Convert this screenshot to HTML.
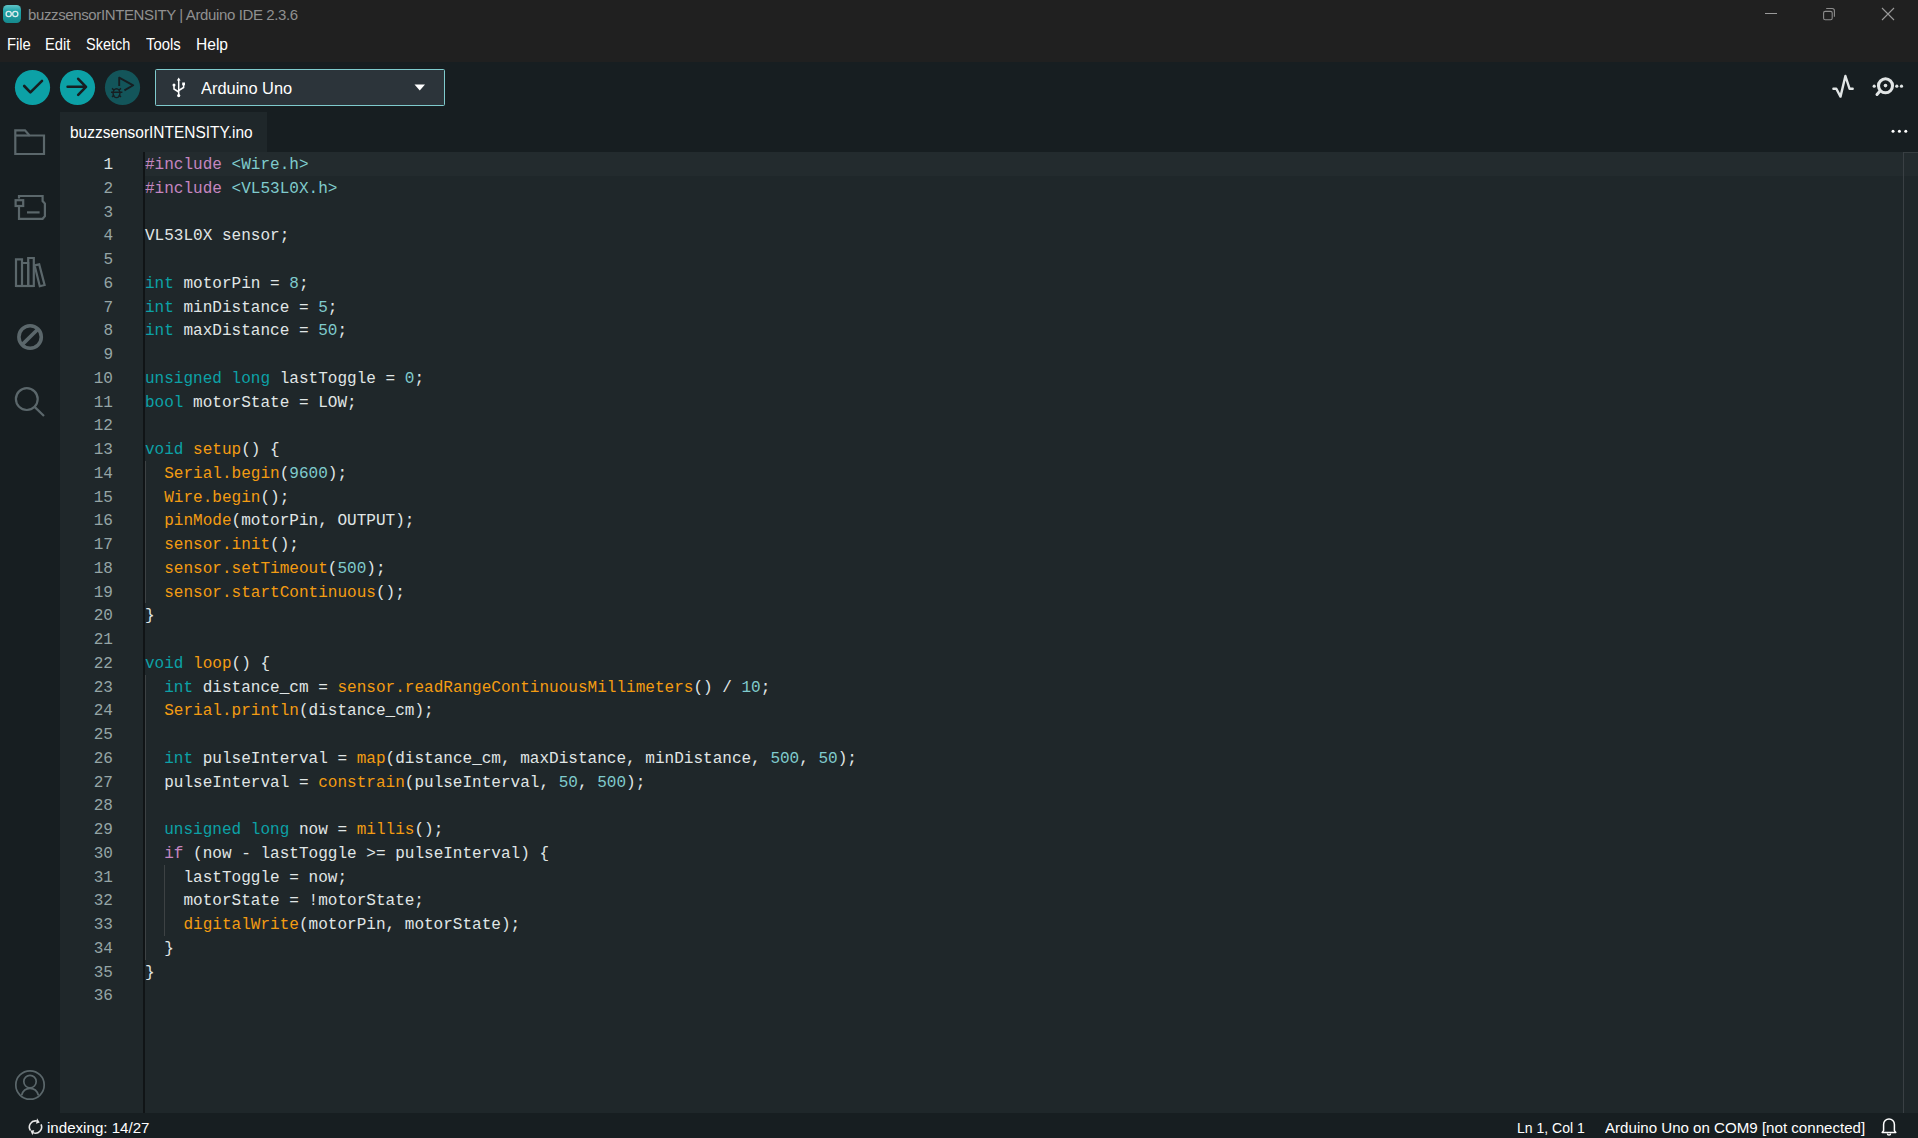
<!DOCTYPE html>
<html><head><meta charset="utf-8">
<style>
*{margin:0;padding:0;box-sizing:border-box}
html,body{width:1918px;height:1138px;overflow:hidden;background:#1f272a;font-family:"Liberation Sans",sans-serif}
.abs{position:absolute}
svg{position:absolute;overflow:visible}
#title{left:0;top:0;width:1918px;height:62px;background:#202020}
#titletext{left:28px;top:4px;font-size:15px;line-height:20px;color:#a8a8a8;white-space:nowrap;letter-spacing:-0.38px}
.menu{top:34px;font-size:15.5px;line-height:20px;color:#ffffff;white-space:nowrap}
#toolbar{left:0;top:62px;width:1918px;height:50px;background:#171e21}
#sidebar{left:0;top:112px;width:60px;height:1001px;background:#171e21}
#tabbar{left:60px;top:112px;width:1858px;height:40px;background:#171e21}
#tab{left:60px;top:112px;width:207px;height:40px;background:#1f272a}
#tabtext{left:70px;top:122px;font-size:16.5px;line-height:20px;color:#ffffff;white-space:nowrap}
#editor{left:60px;top:152px;width:1858px;height:961px;background:#1f272a}
#curline{left:145px;top:152px;width:1773px;height:24px;background:#232b2e}
#gutline{left:143px;top:152px;width:2px;height:961px;background:#101416}
.guide{width:1px;background:#3d4244}
#vscroll{left:1903px;top:152px;width:1px;height:961px;background:#3a4044}
#status{left:0;top:1113px;width:1918px;height:25px;background:#171e21}
.btn{width:35px;height:35px;border-radius:50%;background:#0ca1a6;top:70px}
#board{left:155px;top:69px;width:290px;height:37px;border:1px solid #7fcbcd;border-radius:1.5px;background:#2c343a}
#boardtext{left:201px;top:78px;font-size:16px;line-height:20px;color:#ffffff;white-space:nowrap}
.st{top:1117px;font-size:14.7px;line-height:20px;color:#ffffff;white-space:nowrap}
#code{left:145px;top:154px;width:1750px;height:900px}
.cl{position:absolute;left:0;height:23.75px;line-height:23.75px;font-family:"Liberation Mono",monospace;font-size:16.04px;white-space:pre;color:#e0e6e6}
#lns{left:60px;top:154px;width:53px;height:900px}
.lnn{position:absolute;right:0;height:23.75px;line-height:23.75px;font-family:"Liberation Mono",monospace;font-size:16.04px;color:#95a5a6;text-align:right}
.lnn.act{color:#dae3e3}
b{font-weight:normal}
.k{color:#0ca1a6}.p{color:#c586c0}.f{color:#f39c12}.s{color:#7fcbcd}
.txt{line-height:20px;color:#ffffff;white-space:nowrap;transform-origin:0 0}
</style></head><body>
<div id="title" class="abs"></div>
<svg style="left:0;top:0" width="30" height="30" viewBox="0 0 30 30">
  <defs><linearGradient id="lg" x1="0" y1="0" x2="0" y2="1"><stop offset="0" stop-color="#62c3c7"/><stop offset="0.35" stop-color="#1ea3a8"/><stop offset="1" stop-color="#178a8e"/></linearGradient></defs>
  <rect x="3" y="5" width="18" height="18" rx="4.5" fill="url(#lg)"/>
  <circle cx="8.7" cy="14" r="2.6" fill="none" stroke="#dcecec" stroke-width="1.3"/>
  <circle cx="15.3" cy="14" r="2.6" fill="none" stroke="#dcecec" stroke-width="1.3"/>
</svg>
<!-- window controls -->
<svg style="left:0;top:0" width="1918" height="30">
  <line x1="1765" y1="13.5" x2="1777" y2="13.5" stroke="#9a9a9a" stroke-width="1"/>
  <rect x="1823.6" y="11.4" width="8.6" height="8.4" rx="1.6" fill="none" stroke="#8c8c8c" stroke-width="1.1"/>
  <path d="M1826.2 8.5 H1832.2 Q1834.4 8.5 1834.4 10.7 V16.8" fill="none" stroke="#8c8c8c" stroke-width="1.1"/>
  <path d="M1882 8 L1894 20 M1894 8 L1882 20" stroke="#9a9a9a" stroke-width="1.1"/>
</svg>
<div id="toolbar" class="abs"></div>
<div id="sidebar" class="abs"></div>
<div id="tabbar" class="abs"></div>
<div id="tab" class="abs"></div>
<div id="editor" class="abs"></div>
<div id="curline" class="abs"></div>
<div id="gutline" class="abs"></div>
<div class="abs guide" style="left:145px;top:461px;height:142px"></div>
<div class="abs guide" style="left:145px;top:675px;height:285px"></div>
<div class="abs guide" style="left:164px;top:865px;height:71px"></div>
<div id="vscroll" class="abs"></div>
<div class="abs" style="left:1904px;top:152px;width:14px;height:1px;background:#363d40"></div>
<div id="status" class="abs"></div>
<!-- toolbar buttons -->
<svg style="left:0;top:62px" width="150" height="50" viewBox="0 62 150 50">
  <circle cx="32.5" cy="87.5" r="17.6" fill="#0ca1a6"/>
  <circle cx="77.5" cy="87.5" r="17.6" fill="#0ca1a6"/>
  <circle cx="122.5" cy="87.5" r="17.6" fill="#13555a"/>
  <path d="M24.2 86 L30.4 92.4 L42 80.8" fill="none" stroke="#171e21" stroke-width="2.6" stroke-linecap="round" stroke-linejoin="round"/>
  <path d="M67.6 86.8 H85.8 M78.2 78.8 L86 86.8 L78.2 94.8" fill="none" stroke="#171e21" stroke-width="2.6" stroke-linecap="round" stroke-linejoin="round"/>
  <path d="M119.2 86 V77.6 L133.2 85.3 L124.4 90.4" fill="none" stroke="#171e21" stroke-width="1.9" stroke-linejoin="round"/>
  <g stroke="#171e21" stroke-width="1.4" fill="none" stroke-linecap="butt">
    <ellipse cx="116.5" cy="93.2" rx="3.4" ry="4.4"/>
    <path d="M111 92.2 H122.4 M112 88.4 L114.2 90.2 M121 88.4 L118.8 90.2 M112 96.9 L114.2 95.1 M121 96.9 L118.8 95.1"/>
  </g>
</svg>
<div id="board" class="abs"></div>
<svg style="left:165px;top:74px" width="30" height="28" viewBox="165 74 30 28">
  <g stroke="#ffffff" stroke-width="1.5" fill="none">
    <path d="M178.7 80 V96"/>
    <path d="M174 85.5 V89 L178.7 92"/>
    <path d="M183.6 84 V87.5 L178.7 90.5"/>
  </g>
  <path d="M178.7 77.6 L180.6 80.4 H176.8 Z" fill="#ffffff"/>
  <circle cx="178.7" cy="95.6" r="1.6" fill="#ffffff"/>
  <circle cx="174" cy="85" r="1.5" fill="#ffffff"/>
  <rect x="182.2" y="82.5" width="2.8" height="2.8" fill="#ffffff"/>
</svg>
<svg style="left:405px;top:80px" width="30" height="15" viewBox="405 80 30 15">
  <path d="M414.5 84.5 H425 L419.75 90.5 Z" fill="#ffffff"/>
</svg>
<!-- right toolbar icons -->
<svg style="left:1820px;top:62px" width="98" height="50" viewBox="1820 62 98 50">
  <path d="M1833.4 88.8 H1836.3 L1840.5 96.6 L1845.4 76 L1849.6 88.8 H1852.7" fill="none" stroke="#e1e5e5" stroke-width="2.4" stroke-linejoin="round" stroke-linecap="round"/>
  <circle cx="1885.5" cy="85.8" r="7" fill="none" stroke="#e1e5e5" stroke-width="3.1"/>
  <circle cx="1885.5" cy="85.6" r="1.8" fill="#e1e5e5"/>
  <path d="M1880 91 L1877 94.5" stroke="#e1e5e5" stroke-width="3" stroke-linecap="round"/>
  <circle cx="1874.2" cy="86.2" r="1.6" fill="#e1e5e5"/>
  <circle cx="1896.8" cy="86.2" r="1.6" fill="#e1e5e5"/>
  <circle cx="1901.5" cy="86.2" r="1.6" fill="#e1e5e5"/>
</svg>
<!-- tab more dots -->
<svg style="left:1885px;top:125px" width="30" height="12" viewBox="1885 125 30 12">
  <circle cx="1893" cy="131.2" r="1.5" fill="#ffffff"/>
  <circle cx="1899.4" cy="131.2" r="1.5" fill="#ffffff"/>
  <circle cx="1905.8" cy="131.2" r="1.5" fill="#ffffff"/>
</svg>
<!-- sidebar icons -->
<svg style="left:0;top:112px" width="60" height="1001" viewBox="0 112 60 1001">
  <g fill="none" stroke="#5b676b" stroke-width="2.2" stroke-linejoin="miter">
    <path d="M15.3 154 V130.3 H25 L29.5 135.5 H44 V154 Z"/>
    <path d="M15.3 135.5 H29.5"/>
    <!-- board -->
    <path d="M19 198.5 V196 H42.6 V201 L44.9 203.6 V216.2 L42.6 218.8 H19 V206.8"/>
    <rect x="15.6" y="200.2" width="7.6" height="5.8"/>
    <path d="M27 212.4 H39.6"/>
    <!-- library -->
    <path d="M16 286 V259.3 H22 V286 Z"/>
    <path d="M22 263 H28.2 V286"/>
    <path d="M28.2 286 V258 H33.8 V286 Z"/>
    <path d="M16 286 H33.8"/>
    <path d="M34.6 265.4 L39.2 264.4 L44.6 285 L39.8 286.2 Z"/>
    <!-- search -->
    <circle cx="26.8" cy="399.1" r="10.9"/>
    <path d="M34.6 406.9 L44 416"/>
    <!-- account -->
    <g stroke-width="1.7"><circle cx="30" cy="1085" r="14.2"/>
    <circle cx="30" cy="1081.6" r="6.2"/>
    <path d="M21.6 1095.2 Q23.6 1088.4 30 1088.4 Q36.4 1088.4 38.4 1095.2"/></g>
  </g>
  <g fill="none" stroke="#5b676b" stroke-width="3.6">
    <circle cx="30.1" cy="337" r="11.2"/>
    <path d="M22.2 344.6 L37.8 329.2"/>
  </g>
</svg>
<!-- status bar -->
<svg style="left:25px;top:1115px" width="22" height="23" viewBox="25 1115 22 23">
  <g fill="none" stroke="#e8e8e8" stroke-width="1.6">
    <path d="M30.50 1130.50 A6.10 6.10 0 0 1 36.87 1121.06"/>
    <path d="M41.03 1124.42 A6.10 6.10 0 0 1 33.12 1132.62"/>
  </g>
  <path d="M37.03 1118.33 L39.74 1122.61 L36.09 1123.65 Z" fill="#e8e8e8"/>
  <path d="M32.35 1135.22 L30.50 1130.50 L34.28 1130.17 Z" fill="#e8e8e8"/>
</svg>
<svg style="left:1878px;top:1115px" width="24" height="23" viewBox="1878 1115 24 23">
  <path d="M1883.6 1130.6 V1124.4 A5.4 5.4 0 0 1 1894.4 1124.4 V1130.6 L1895.8 1132.4 H1882.2 Z" fill="none" stroke="#ffffff" stroke-width="1.5" stroke-linejoin="round"/>
  <path d="M1887.4 1133.4 A1.6 1.6 0 0 0 1890.6 1133.4" fill="none" stroke="#ffffff" stroke-width="1.4"/>
</svg>
<div class="abs txt" style="left:28px;top:5px;font-size:15px;letter-spacing:-0.38px;color:#909090">buzzsensorINTENSITY | Arduino IDE 2.3.6</div>
<div class="abs txt " style="left:6.84px;top:34.58px;font-size:15.64px;transform:scaleX(0.946)">File</div>
<div class="abs txt " style="left:44.55px;top:34.58px;font-size:15.64px;transform:scaleX(0.942)">Edit</div>
<div class="abs txt " style="left:86.15px;top:34.58px;font-size:15.64px;transform:scaleX(0.926)">Sketch</div>
<div class="abs txt " style="left:145.77px;top:34.58px;font-size:15.64px;transform:scaleX(0.950)">Tools</div>
<div class="abs txt " style="left:195.58px;top:34.58px;font-size:15.64px;transform:scaleX(0.996)">Help</div>
<div class="abs txt" style="left:69.83px;top:123.46px;font-size:16px;transform:scaleX(0.966)">buzzsensorINTENSITY.ino</div>
<div class="abs txt " style="left:201.40px;top:78.38px;font-size:16.21px;transform:scaleX(1.013)">Arduino Uno</div>
<div class="abs txt" style="left:47.16px;top:1118.1px;font-size:14.8px;transform:scaleX(1.021)">indexing: 14/27</div>
<div class="abs txt" style="left:1516.5px;top:1118.2px;font-size:15.2px;transform:scaleX(0.923)">Ln 1, Col 1</div>
<div class="abs txt" style="left:1604.5px;top:1118.2px;font-size:15.2px;transform:scaleX(0.994)">Arduino Uno on COM9 [not connected]</div>
<div id="code" class="abs">
<div class="cl" style="top:0.00px"><b class=p>#include</b> <b class=s>&lt;Wire.h&gt;</b></div>
<div class="cl" style="top:23.75px"><b class=p>#include</b> <b class=s>&lt;VL53L0X.h&gt;</b></div>
<div class="cl" style="top:47.50px"></div>
<div class="cl" style="top:71.25px">VL53L0X sensor;</div>
<div class="cl" style="top:95.00px"></div>
<div class="cl" style="top:118.75px"><b class=k>int</b> motorPin = <b class=s>8</b>;</div>
<div class="cl" style="top:142.50px"><b class=k>int</b> minDistance = <b class=s>5</b>;</div>
<div class="cl" style="top:166.25px"><b class=k>int</b> maxDistance = <b class=s>50</b>;</div>
<div class="cl" style="top:190.00px"></div>
<div class="cl" style="top:213.75px"><b class=k>unsigned</b> <b class=k>long</b> lastToggle = <b class=s>0</b>;</div>
<div class="cl" style="top:237.50px"><b class=k>bool</b> motorState = LOW;</div>
<div class="cl" style="top:261.25px"></div>
<div class="cl" style="top:285.00px"><b class=k>void</b> <b class=f>setup</b>() {</div>
<div class="cl" style="top:308.75px">  <b class=f>Serial.begin</b>(<b class=s>9600</b>);</div>
<div class="cl" style="top:332.50px">  <b class=f>Wire.begin</b>();</div>
<div class="cl" style="top:356.25px">  <b class=f>pinMode</b>(motorPin, OUTPUT);</div>
<div class="cl" style="top:380.00px">  <b class=f>sensor.init</b>();</div>
<div class="cl" style="top:403.75px">  <b class=f>sensor.setTimeout</b>(<b class=s>500</b>);</div>
<div class="cl" style="top:427.50px">  <b class=f>sensor.startContinuous</b>();</div>
<div class="cl" style="top:451.25px">}</div>
<div class="cl" style="top:475.00px"></div>
<div class="cl" style="top:498.75px"><b class=k>void</b> <b class=f>loop</b>() {</div>
<div class="cl" style="top:522.50px">  <b class=k>int</b> distance_cm = <b class=f>sensor.readRangeContinuousMillimeters</b>() / <b class=s>10</b>;</div>
<div class="cl" style="top:546.25px">  <b class=f>Serial.println</b>(distance_cm);</div>
<div class="cl" style="top:570.00px"></div>
<div class="cl" style="top:593.75px">  <b class=k>int</b> pulseInterval = <b class=f>map</b>(distance_cm, maxDistance, minDistance, <b class=s>500</b>, <b class=s>50</b>);</div>
<div class="cl" style="top:617.50px">  pulseInterval = <b class=f>constrain</b>(pulseInterval, <b class=s>50</b>, <b class=s>500</b>);</div>
<div class="cl" style="top:641.25px"></div>
<div class="cl" style="top:665.00px">  <b class=k>unsigned</b> <b class=k>long</b> now = <b class=f>millis</b>();</div>
<div class="cl" style="top:688.75px">  <b class=p>if</b> (now - lastToggle &gt;= pulseInterval) {</div>
<div class="cl" style="top:712.50px">    lastToggle = now;</div>
<div class="cl" style="top:736.25px">    motorState = !motorState;</div>
<div class="cl" style="top:760.00px">    <b class=f>digitalWrite</b>(motorPin, motorState);</div>
<div class="cl" style="top:783.75px">  }</div>
<div class="cl" style="top:807.50px">}</div>
<div class="cl" style="top:831.25px"></div>
</div>
<div id="lns" class="abs">
<div class="lnn act" style="top:0.00px">1</div>
<div class="lnn" style="top:23.75px">2</div>
<div class="lnn" style="top:47.50px">3</div>
<div class="lnn" style="top:71.25px">4</div>
<div class="lnn" style="top:95.00px">5</div>
<div class="lnn" style="top:118.75px">6</div>
<div class="lnn" style="top:142.50px">7</div>
<div class="lnn" style="top:166.25px">8</div>
<div class="lnn" style="top:190.00px">9</div>
<div class="lnn" style="top:213.75px">10</div>
<div class="lnn" style="top:237.50px">11</div>
<div class="lnn" style="top:261.25px">12</div>
<div class="lnn" style="top:285.00px">13</div>
<div class="lnn" style="top:308.75px">14</div>
<div class="lnn" style="top:332.50px">15</div>
<div class="lnn" style="top:356.25px">16</div>
<div class="lnn" style="top:380.00px">17</div>
<div class="lnn" style="top:403.75px">18</div>
<div class="lnn" style="top:427.50px">19</div>
<div class="lnn" style="top:451.25px">20</div>
<div class="lnn" style="top:475.00px">21</div>
<div class="lnn" style="top:498.75px">22</div>
<div class="lnn" style="top:522.50px">23</div>
<div class="lnn" style="top:546.25px">24</div>
<div class="lnn" style="top:570.00px">25</div>
<div class="lnn" style="top:593.75px">26</div>
<div class="lnn" style="top:617.50px">27</div>
<div class="lnn" style="top:641.25px">28</div>
<div class="lnn" style="top:665.00px">29</div>
<div class="lnn" style="top:688.75px">30</div>
<div class="lnn" style="top:712.50px">31</div>
<div class="lnn" style="top:736.25px">32</div>
<div class="lnn" style="top:760.00px">33</div>
<div class="lnn" style="top:783.75px">34</div>
<div class="lnn" style="top:807.50px">35</div>
<div class="lnn" style="top:831.25px">36</div>
</div>
</body></html>
